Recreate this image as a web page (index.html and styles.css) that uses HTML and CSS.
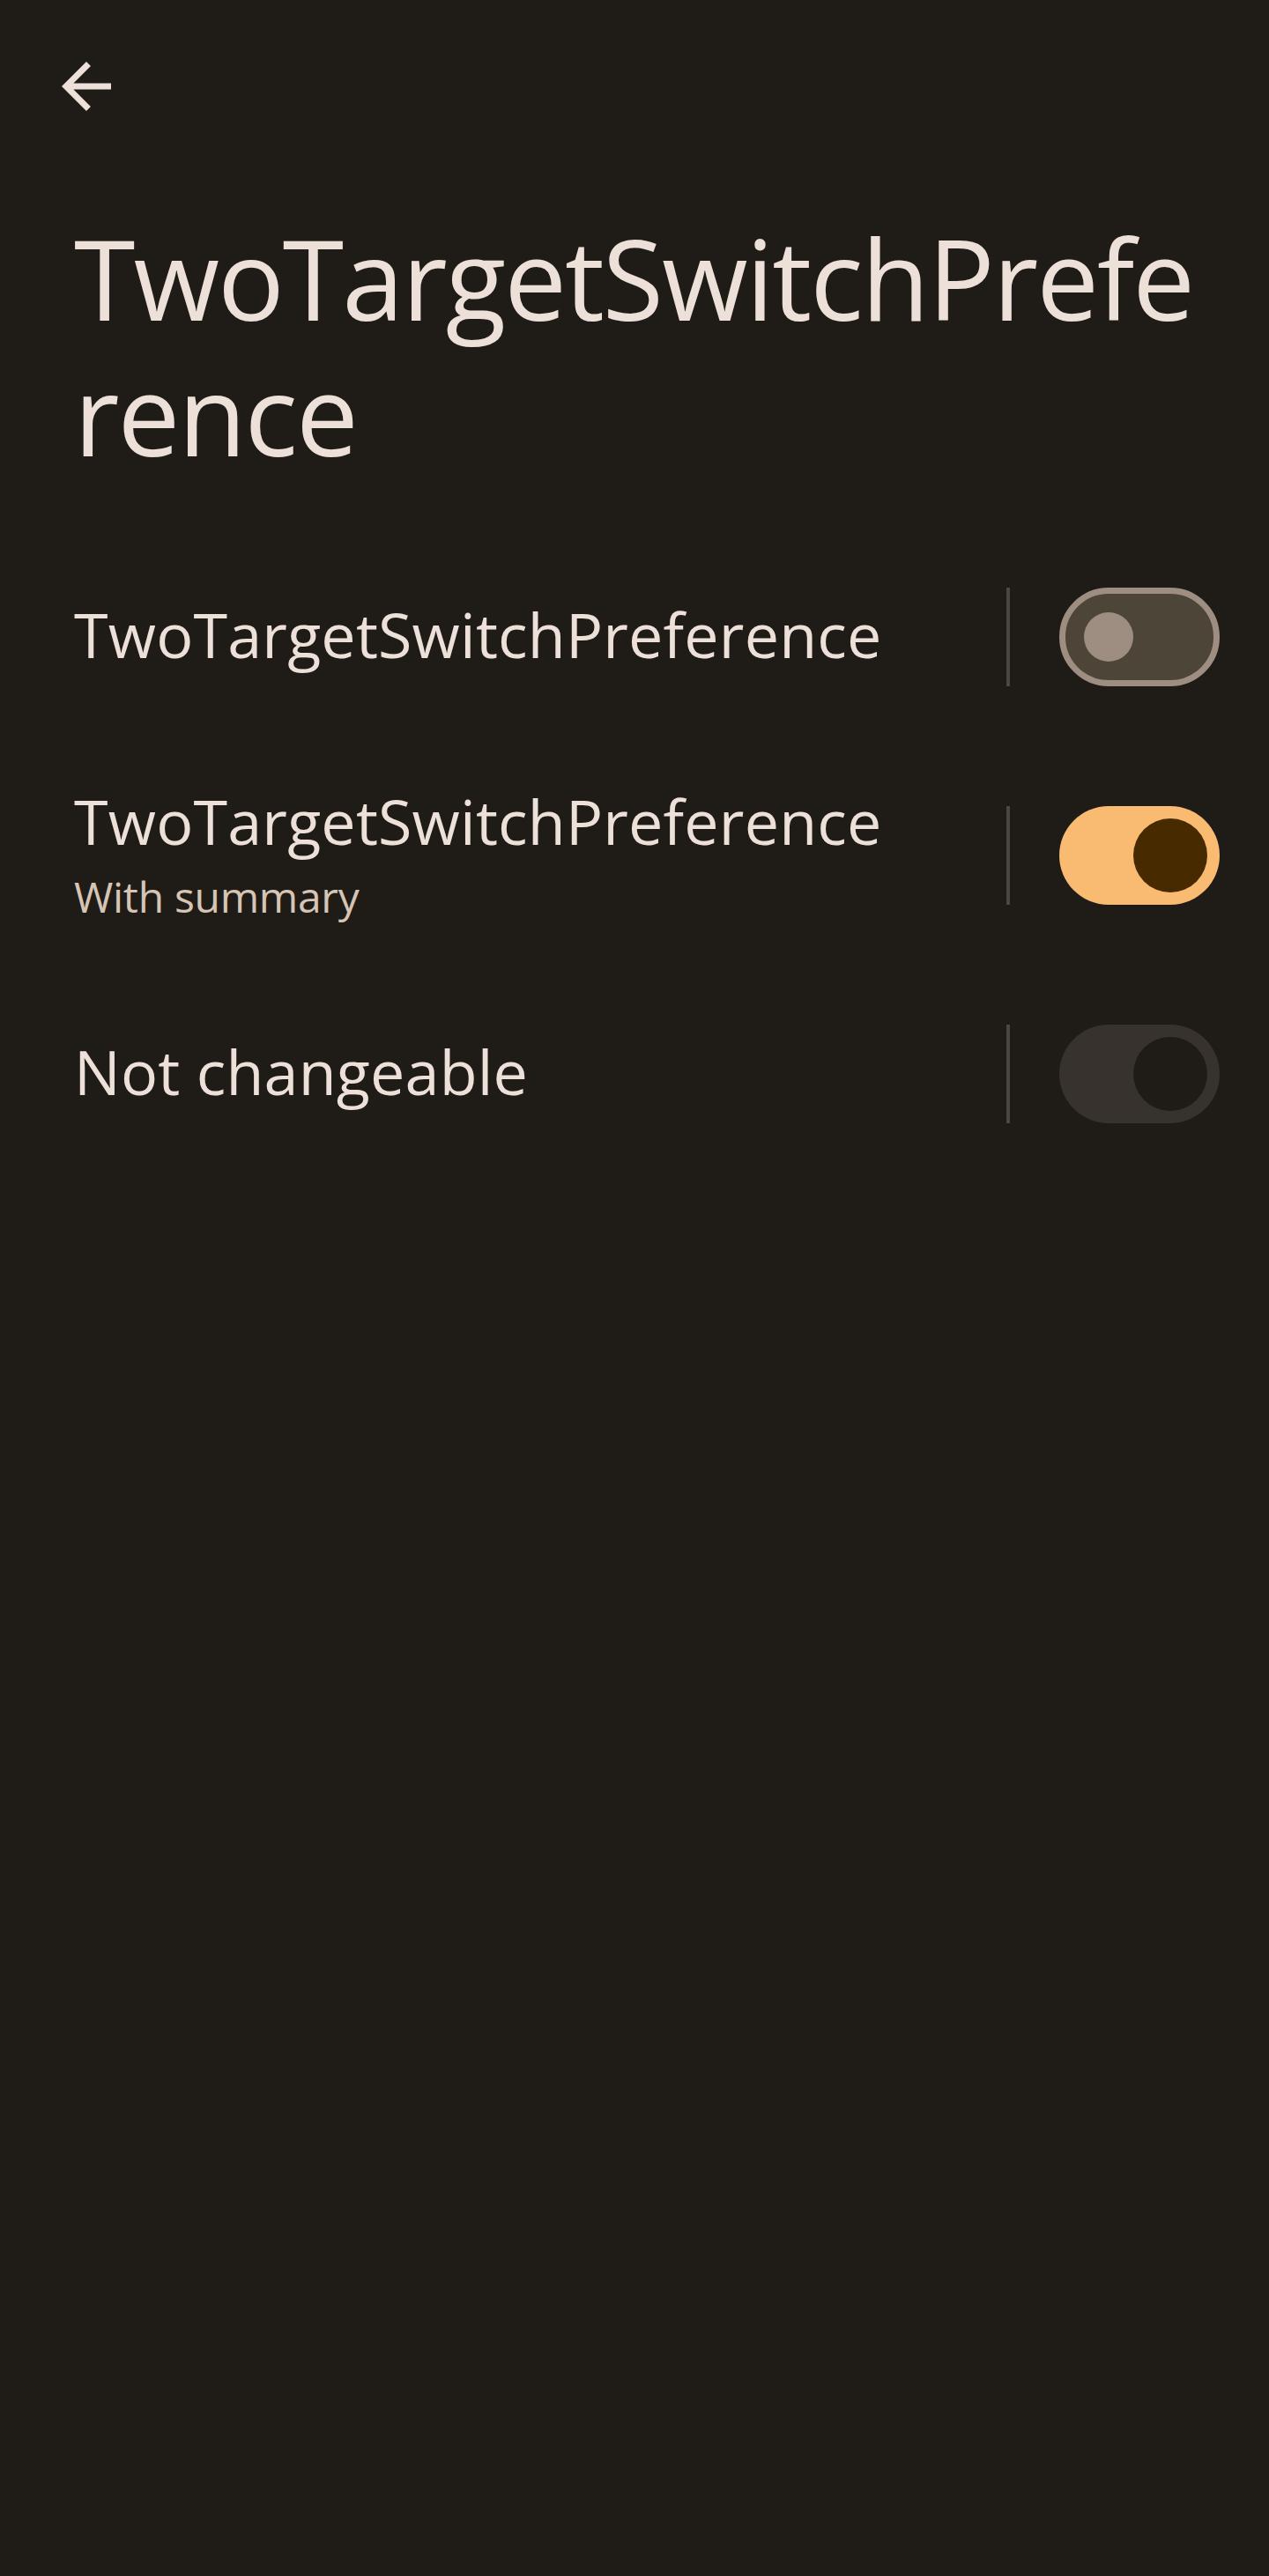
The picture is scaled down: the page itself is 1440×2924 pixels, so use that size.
FILE: index.html
```html
<!DOCTYPE html>
<html lang="en">
<head>
<meta charset="utf-8">
<title>TwoTargetSwitchPreference</title>
<link rel="stylesheet" href="styles.css">
</head>
<body>
<div class="screen">
  <header class="toolbar">
    <button class="back" aria-label="Navigate up">
      <svg viewBox="0 0 24 24" width="84" height="84" aria-hidden="true"><path d="M20 11H7.83l5.59-5.59L12 4l-8 8 8 8 1.41-1.41L7.83 13H20v-2z"/></svg>
    </button>
  </header>
  <h1 class="page-title"><span class="title-line">TwoTargetSwitchPrefe</span><span class="title-line">rence</span></h1>
  <ul class="prefs">
    <li class="pref">
      <div class="pref-text single">
        <div class="pref-title">TwoTargetSwitchPreference</div>
      </div>
      <span class="divider"></span>
      <span class="switch off"><span class="thumb"></span></span>
    </li>
    <li class="pref">
      <div class="pref-text">
        <div class="pref-title">TwoTargetSwitchPreference</div>
        <div class="pref-summary">With summary</div>
      </div>
      <span class="divider"></span>
      <span class="switch on"><span class="thumb"></span></span>
    </li>
    <li class="pref">
      <div class="pref-text single">
        <div class="pref-title">Not changeable</div>
      </div>
      <span class="divider"></span>
      <span class="switch on disabled"><span class="thumb"></span></span>
    </li>
  </ul>
</div>
</body>
</html>
```
FILE: styles.css
```css
html, body {
  margin: 0;
  padding: 0;
  background: #1f1b17;
}
body {
  font-family: "Open Sans", "Liberation Sans", sans-serif;
  color: #ece0d8;
}
.screen {
  min-height: 2924px;
  background: #1f1b17;
}
.toolbar {
  display: flex;
  padding: 56px 0 0 56px;
  height: 84px;
}
.back {
  width: 84px;
  height: 84px;
  padding: 0;
  border: 0;
  background: transparent;
  display: flex;
}
.back svg {
  fill: #ece0d8;
}
.page-title {
  margin: 98px 0 0 0;
  padding: 0 56px 0 84px;
  font-size: 126px;
  line-height: 154px;
  font-weight: 400;
  letter-spacing: -2px;
  color: #ece0d8;
  white-space: nowrap;
}
.title-line {
  display: block;
  height: 154px;
}
.prefs {
  list-style: none;
  margin: 53px 0 0 0;
  padding: 0;
}
.pref {
  display: flex;
  align-items: center;
  height: 248px;
  padding: 0 56px 0 84px;
}
.pref-text {
  flex: 1;
  min-width: 0;
}
.pref-text.single {
  padding-bottom: 7px;
}
.pref-title {
  font-size: 70px;
  line-height: 84px;
  letter-spacing: 0.2px;
  color: #ece0d8;
  white-space: nowrap;
}
.pref-summary {
  margin-top: 9px;
  font-size: 48px;
  line-height: 70px;
  letter-spacing: -0.3px;
  color: #d6c4b4;
}
.divider {
  width: 4px;
  height: 112px;
  background: #4a4541;
  margin-right: 56px;
}
.switch {
  box-sizing: border-box;
  width: 182px;
  height: 112px;
  border-radius: 56px;
  display: flex;
  align-items: center;
}
.switch.off {
  background: #4e4539;
  border: 7px solid #9d8e81;
  padding-left: 21px;
}
.switch.off .thumb {
  width: 56px;
  height: 56px;
  border-radius: 50%;
  background: #9d8e81;
}
.switch.on {
  background: #f9bb72;
  justify-content: flex-end;
  padding-right: 14px;
}
.switch.on .thumb {
  width: 84px;
  height: 84px;
  border-radius: 50%;
  background: #472a00;
}
.switch.on.disabled {
  background: #37322d;
}
.switch.on.disabled .thumb {
  background: #1f1b17;
}
```
